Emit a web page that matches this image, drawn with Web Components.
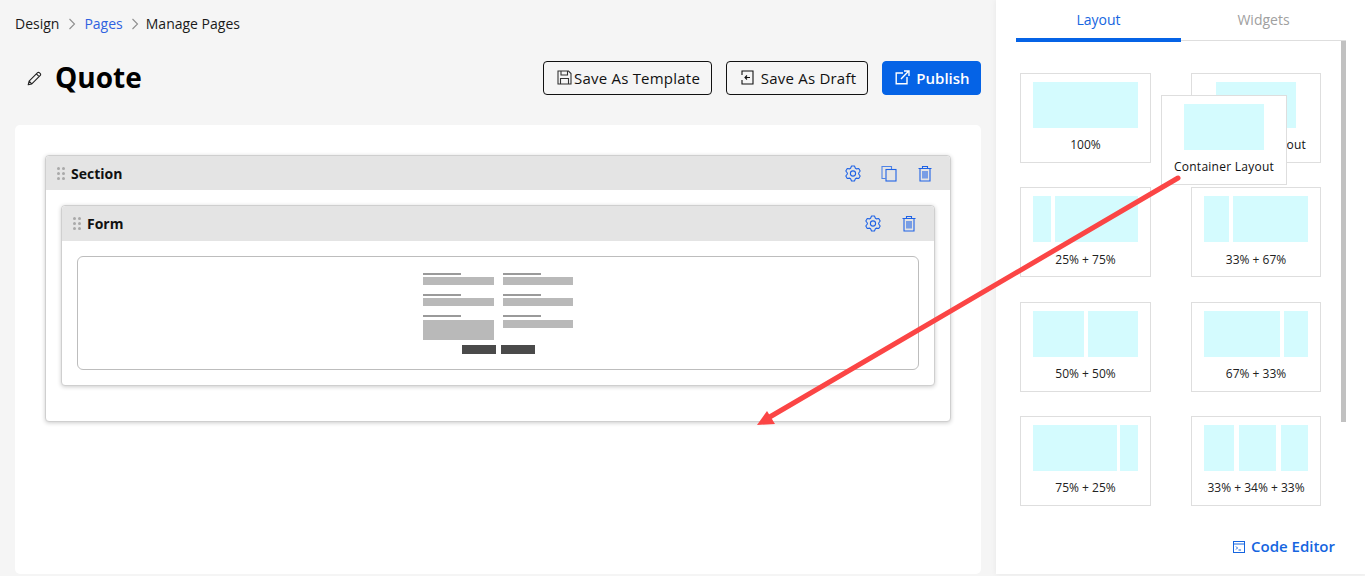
<!DOCTYPE html>
<html lang="en">
<head>
<meta charset="utf-8">
<title>Quote</title>
<style>
    html, body { margin: 0; height: 576px; overflow: hidden; }
    body { background: #f5f5f5; font-family: "Open Sans", "Noto Sans", sans-serif; color: #000; }
</style>
</head>
<body>
<page-shell>
    <bread-crumbs slot="crumbs"></bread-crumbs>
    <title-bar slot="title" heading="Quote"></title-bar>
    <builder-canvas slot="canvas"></builder-canvas>
    <side-panel slot="side"></side-panel>
</page-shell>

<script>
// six toothed cog, points worked out once so the path stays readable in the icon map
function gearPath () {
    const pts = []
    for (let i = 0; i < 6; i++) {
        const a = i * 60 - 90
        for (const [r, d] of [[5.7, -25], [7.6, -11], [7.6, 11], [5.7, 25]]) {
            const t = (a + d) * Math.PI / 180
            pts.push((8 + r * Math.cos(t)).toFixed(2) + ' ' + (8.500 + r * Math.sin(t)).toFixed(2))
        }
    }
    return 'M' + pts.join('L') + 'Z'
}

const icons = {
    gear: `<svg viewBox="0 0 16 17" fill="none" stroke="currentColor" stroke-width="1.1" stroke-linejoin="round"><circle cx="8" cy="8.5" r="2.6"/><path d="${gearPath()}"/></svg>`,
    copy: `<svg viewBox="0 0 16 17" fill="none" stroke="currentColor" stroke-width="1.1"><path d="M4.500 13.500H1V1.500h9.500v3" opacity=".75"/><rect x="5" y="4.500" width="10" height="11.500"/></svg>`,
    trash: `<svg viewBox="0 0 16 17" fill="none" stroke="currentColor" stroke-width="1.1"><path d="M1.500 3.500h13M5.500 3.300V1.500h5v1.800M3 3.500V16h10V3.500M6 6v7.500M8 6v7.500M10 6v7.500"/></svg>`
}

customElements.define('page-shell', class extends HTMLElement {
    constructor () {
        super()
        this.attachShadow({ mode: 'open' }).innerHTML = `
        <style>
            :host { display: grid; grid-template-columns: 996px 369px; height: 576px; position: relative; }
            #main { display: flex; flex-direction: column; padding: 0 15px; box-sizing: border-box; height: 574px; }
            #arrow { position: absolute; left: 0; top: 0; pointer-events: none; }
        </style>
        <div id="main">
            <slot name="crumbs"></slot>
            <slot name="title"></slot>
            <slot name="canvas"></slot>
        </div>
        <slot name="side"></slot>
        <svg id="arrow" width="1365" height="576">
            <path d="M1178 178 L768 418" stroke="#fb4545" stroke-width="5" stroke-linecap="round" fill="none"/>
            <path d="M757 425 L767 411 L775 424 Z" fill="#fb4545"/>
        </svg>`
    }
})

customElements.define('bread-crumbs', class extends HTMLElement {
    constructor () {
        super()
        const chevron = `<svg width="8" height="12" viewBox="0 0 8 12" fill="none" stroke="#8f8f8f" stroke-width="1.1"><path d="M1.500 1l5 5-5 5"/></svg>`
        this.attachShadow({ mode: 'open' }).innerHTML = `
        <style>
            :host { display: flex; align-items: center; height: 47px; font-size: 14px; color: #1a1a1a; }
            span { line-height: 19px; }
            svg { margin: 0 8px 0 9px; }
            svg.b { margin: 0 7px 0 8px; }
            .link { color: #2f62e0; }
        </style>
        <span>Design</span>${chevron}<span class="link">Pages</span>${chevron.replace('<svg', '<svg class="b"')}<span>Manage Pages</span>`
    }
})

customElements.define('action-button', class extends HTMLElement {
    constructor () {
        super()
        this.attachShadow({ mode: 'open' }).innerHTML = `
        <style>
            :host { display: inline-flex; align-items: center; justify-content: center; height: 34px; box-sizing: border-box;
                border: 1px solid #111; border-radius: 4px; font-size: 15px; font-weight: 500; letter-spacing: .22px; color: #111; }
            :host([primary]) { background: #0563e6; border-color: #0563e6; color: #fff; font-weight: 600; letter-spacing: 0; }
        </style>
        <slot></slot>`
    }
})

customElements.define('title-bar', class extends HTMLElement {
    constructor () {
        super()
        this.attachShadow({ mode: 'open' }).innerHTML = `
        <style>
            :host { display: flex; align-items: center; height: 60px; margin-bottom: 18px; }
            #pencil { width: 15px; height: 15px; margin: 3px 13px 0 12px; }
            h1 { margin: 0; font-size: 28px; font-weight: 700; line-height: 38px; flex: 1; }
            #actions { display: flex; gap: 14px; margin-top: 1px; }
            svg.i { width: 15px; height: 15px; }
            #tpl { width: 169px; gap: 2px; padding-left: 2px; }
            #draft { width: 142px; gap: 6px; padding-left: 2px; }
            #pub { width: 99px; gap: 6px; padding-left: 2px; }
        </style>
        <svg id="pencil" viewBox="0 0 15 15" fill="none" stroke="#222" stroke-width="1.1" stroke-linejoin="round"><path d="M1.200 13.800l.9-3.600L10.600 1.700a1.200 1.200 0 0 1 1.700 0l1 1a1.200 1.200 0 0 1 0 1.700L4.800 12.900zM2.100 10.200l2.700 2.700M9.400 2.900l2.700 2.700"/></svg>
        <h1>${this.getAttribute('heading')}</h1>
        <div id="actions">
            <action-button id="tpl"><svg class="i" viewBox="0 0 15 15" fill="none" stroke="#333" stroke-width="1.1"><path d="M1 1h10.500L14 3.500V14H1zM4 1v4h6.500V1M3.500 14V8.500h8V14"/></svg>Save As Template</action-button>
            <action-button id="draft"><svg class="i" viewBox="0 0 15 15" fill="none" stroke="#111" stroke-width="1.1"><path d="M2 5V1h11v13H2v-4M10 7.500H5M7 5.500l-2 2 2 2"/></svg>Save As Draft</action-button>
            <action-button id="pub" primary><svg class="i" viewBox="0 0 15 15" fill="none" stroke="#fff" stroke-width="1.400"><path d="M8 3H1.200v10.800h10.800V7M6 9l7.500-7.800M9 1h5v5"/></svg>Publish</action-button>
        </div>`
    }
})

customElements.define('drag-dots', class extends HTMLElement {
    constructor () {
        super()
        this.attachShadow({ mode: 'open' }).innerHTML = `
        <style>
            :host { display: grid; grid-template-columns: 3px 3px; grid-auto-rows: 3px; gap: 2px; }
            i { background: #a9a9a9; border-radius: 50%; }
        </style>
        <i></i><i></i><i></i><i></i><i></i><i></i>`
    }
})

customElements.define('block-panel', class extends HTMLElement {
    constructor () {
        super()
        const tools = (this.getAttribute('tools') || '').split(' ')
        const buttons = tools.map(t => `<span class="t">${icons[t]}</span>`).join('')
        this.attachShadow({ mode: 'open' }).innerHTML = `
        <style>
            :host { display: block; background: #fff; border: 1px solid #cfcfcf; border-radius: 4px; box-shadow: 0 1px 4px rgba(0,0,0,.2); }
            header { display: flex; align-items: center; height: var(--head, 34px); background: #e4e4e4; padding: 0 17px 0 11px; border-radius: 4px 4px 0 0; gap: 6px; }
            b { font-size: 14px; font-weight: 700; color: #111; flex: 1; line-height: 19px; }
            .t { display: block; width: 16px; height: 17px; margin-left: 14px; color: #1f63e6; }
            .t svg { display: block; width: 16px; height: 17px; }
            #body { padding: 15px; }
        </style>
        <header><drag-dots></drag-dots><b>${this.getAttribute('label')}</b>${buttons}</header>
        <div id="body"><slot></slot></div>`
    }
})

customElements.define('form-thumb', class extends HTMLElement {
    constructor () {
        super()
        this.attachShadow({ mode: 'open' }).innerHTML = `
        <style>
            :host { display: block; height: 114px; box-sizing: border-box; padding-top: 16px; border: 1px solid #bdbdbd; border-radius: 6px; background: #fff; }
            #wrap { width: 150px; margin: 0 auto; }
            #cols { display: grid; grid-template-columns: 71px 70px; column-gap: 9px; }
            .col { display: flex; flex-direction: column; }
            .l { width: 38px; height: 2px; background: #9a9a9a; margin-bottom: 2px; }
            .f { height: 8px; background: #b9b9b9; margin-bottom: 9px; }
            .l.last { margin-bottom: 3px; }
            .f.big { height: 20px; margin-bottom: 0; }
            #btns { display: flex; gap: 5px; margin: 5px 0 0 39px; }
            #btns i { width: 34px; height: 9px; background: #4a4a4a; }
        </style>
        <div id="wrap">
            <div id="cols">
                <div class="col"><div class="l"></div><div class="f"></div><div class="l"></div><div class="f"></div><div class="l last"></div><div class="f big"></div></div>
                <div class="col"><div class="l"></div><div class="f"></div><div class="l"></div><div class="f"></div><div class="l last"></div><div class="f"></div></div>
            </div>
            <div id="btns"><i></i><i></i></div>
        </div>`
    }
})

customElements.define('builder-canvas', class extends HTMLElement {
    constructor () {
        super()
        this.attachShadow({ mode: 'open' }).innerHTML = `
        <style>
            :host { display: block; flex: 1; background: #fff; border-radius: 5px; padding: 30px; }
            #section { width: 904px; height: 265px; }
            #form { height: 179px; --head: 35px; }
        </style>
        <block-panel id="section" label="Section" tools="gear copy trash">
            <block-panel id="form" label="Form" tools="gear trash"><form-thumb></form-thumb></block-panel>
        </block-panel>`
    }
})

customElements.define('layout-card', class extends HTMLElement {
    constructor () {
        super()
        const cols = (this.getAttribute('px') || '1fr').split(' ')
        this.attachShadow({ mode: 'open' }).innerHTML = `
        <style>
            :host { display: block; box-sizing: border-box; background: #fff; border: 1px solid #dedede; font-size: 12px; color: #222; text-align: center; }
            :host([wide]) { letter-spacing: .25px; color: #111; }
            #p { display: grid; grid-template-columns: ${cols.join(' ')}; justify-content: center; gap: var(--g, 4px); height: 46px; margin: 8px 12px 0; }
            #p i { background: #d4fbfe; }
            span { display: block; line-height: 16px; margin-top: var(--lbl, 9px); white-space: nowrap; }
        </style>
        <div id="p">${cols.map(() => '<i></i>').join('')}</div>
        <span><slot></slot></span>`
    }
})

customElements.define('side-panel', class extends HTMLElement {
    constructor () {
        super()
        this.attachShadow({ mode: 'open' }).innerHTML = `
        <style>
            :host { display: flex; flex-direction: column; background: #fff; height: 574px; padding: 0 19px 0 20px; box-sizing: border-box; position: relative; box-shadow: 0 0 6px rgba(0,0,0,.06); }
            #tabs { display: grid; grid-template-columns: 165px 165px; height: 41px; border-bottom: 1px solid #dedede; box-sizing: border-box; flex: none; }
            #tabs div { text-align: center; font-size: 14px; line-height: 40px; color: #a0a0a0; font-weight: 500; }
            #tabs .on { color: #1565e0; height: 42px; box-sizing: border-box; border-bottom: 4px solid #0563e6; }
            #bar { position: absolute; left: 345px; top: 41px; width: 5px; height: 381px; background: #c1c1c1; }
            #grid { display: grid; grid-template-columns: 131px 130px; grid-auto-rows: 90px; column-gap: 40px; row-gap: 24.33px; margin: 32px 0 0 4px; }
            #code { position: absolute; right: 30px; top: 537px; display: flex; align-items: center; gap: 6px; font-size: 15px; font-weight: 600; color: #1565e0; line-height: 19px; }
            #code svg { width: 12px; height: 12px; }
            #ghost { position: absolute; left: 165px; top: 95px; width: 126px; height: 90px; }
            .r2 { --lbl: 10px; }
            #three { --g: 5px; }
            #tail { --g: 3px; }
        </style>
        <div id="tabs"><div class="on">Layout</div><div>Widgets</div></div>
        <div id="bar"></div>
        <div id="grid">
            <layout-card>100%</layout-card>
            <layout-card px="80px" wide>Container Layout</layout-card>
            <layout-card class="r2" px="18px 83px">25% + 75%</layout-card>
            <layout-card class="r2" px="25px 75px">33% + 67%</layout-card>
            <layout-card px="51px 50px">50% + 50%</layout-card>
            <layout-card px="76px 24px">67% + 33%</layout-card>
            <layout-card id="tail" px="84px 18px">75% + 25%</layout-card>
            <layout-card id="three" px="30px 37px 27px">33% + 34% + 33%</layout-card>
        </div>
        <layout-card id="ghost" px="80px" wide>Container Layout</layout-card>
        <div id="code"><svg viewBox="0 0 12 12" fill="none" stroke="currentColor" stroke-width="1"><rect x=".5" y=".5" width="11" height="11"/><path d="M.5 3h11M3 5.500l1.500 1.500L3 8.500M5.500 9H8"/></svg>Code Editor</div>`
    }
})
</script>
</body>
</html>
